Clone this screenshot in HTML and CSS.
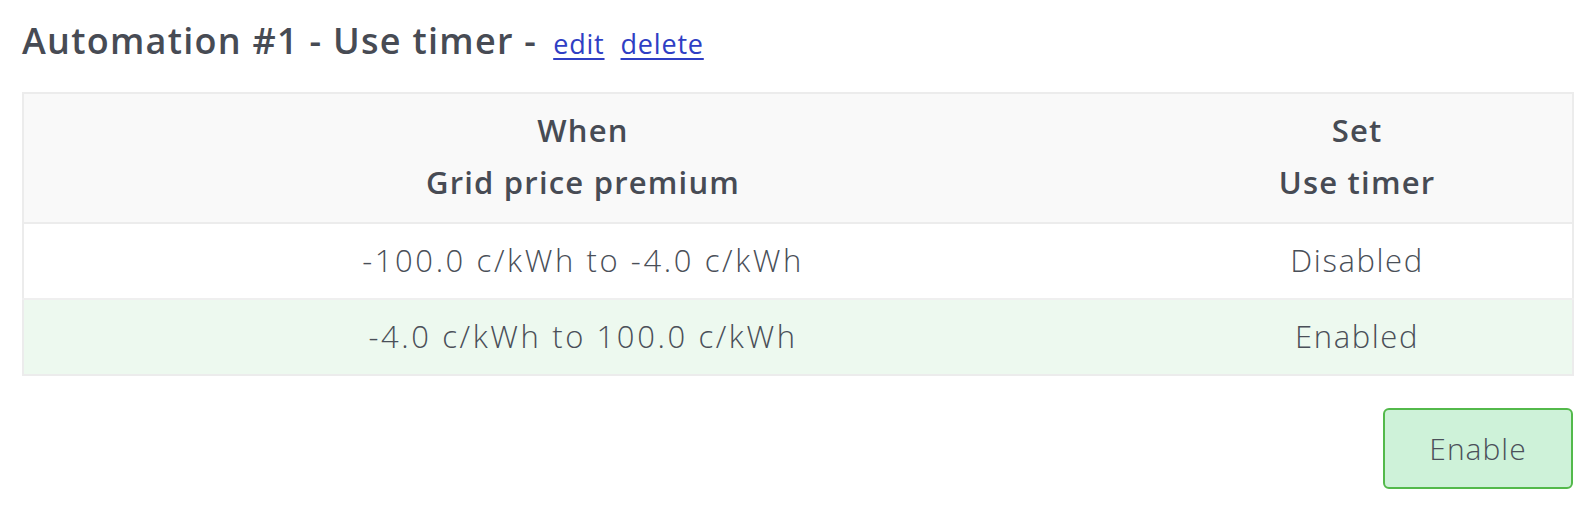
FILE: index.html
```html
<!DOCTYPE html>
<html lang="en">
<head>
<meta charset="utf-8">
<title>Automation #1</title>
<link rel="stylesheet" href="styles.css">
</head>
<body>
<div class="page">
  <h2 class="title">Automation #1 - Use timer -<a class="link" href="#">edit</a><a class="link" href="#">delete</a></h2>
  <table class="rules">
    <colgroup>
      <col class="col-when">
      <col class="col-set">
    </colgroup>
    <thead>
      <tr>
        <th><div>When</div><div>Grid price premium</div></th>
        <th><div>Set</div><div>Use timer</div></th>
      </tr>
    </thead>
    <tbody>
      <tr>
        <td class="range">-100.0 c/kWh to -4.0 c/kWh</td>
        <td>Disabled</td>
      </tr>
      <tr class="active">
        <td class="range">-4.0 c/kWh to 100.0 c/kWh</td>
        <td>Enabled</td>
      </tr>
    </tbody>
  </table>
  <div class="actions">
    <button class="btn-enable" type="button">Enable</button>
  </div>
</div>
</body>
</html>
```
FILE: styles.css
```css
html, body {
  margin: 0;
  padding: 0;
  background: #ffffff;
}

body {
  font-family: "Open Sans", "Noto Sans", sans-serif;
  color: #474b54;
}

.page {
  padding: 19px 14px 0 22px;
}

.title {
  margin: 0;
  font-size: 36px;
  line-height: 44px;
  font-weight: 600;
  letter-spacing: 1.27px;
  color: #474b54;
  height: 73px;
}

.link {
  font-size: 27px;
  font-weight: 500;
  letter-spacing: 0.8px;
  color: #2f3ec4;
  text-decoration: underline;
  text-underline-offset: 4px;
  text-decoration-thickness: 2px;
  margin-left: 16px;
}

.rules {
  width: 100%;
  border-collapse: collapse;
  border: 2px solid #ececec;
  font-size: 31px;
  letter-spacing: 1.2px;
}

.col-when {
  width: 72.2%;
}

.col-set {
  width: 27.8%;
}

.rules th {
  background: #f9f9f9;
  font-weight: 600;
  line-height: 52px;
  padding: 10px 8px 14px;
  text-align: center;
  border-bottom: 2px solid #ececec;
  color: #474b54;
}

.rules td {
  font-weight: 350;
  line-height: 46px;
  padding: 13px 8px 15px;
  text-align: center;
  color: #4a4f58;
  border-top: 2px solid #efefef;
  letter-spacing: 1.6px;
}

.rules td.range {
  letter-spacing: 2.6px;
}

.rules tr.active td {
  background: #edf9ef;
}

.actions {
  display: flex;
  justify-content: flex-end;
  padding-top: 32px;
}

.btn-enable {
  width: 190px;
  height: 81px;
  border: 2px solid #53b94b;
  border-radius: 6px;
  background: #cef2d9;
  font-family: "Open Sans", "Noto Sans", sans-serif;
  font-size: 30px;
  font-weight: 350;
  letter-spacing: 1px;
  color: #4b5059;
  margin-right: 1px;
}
```
